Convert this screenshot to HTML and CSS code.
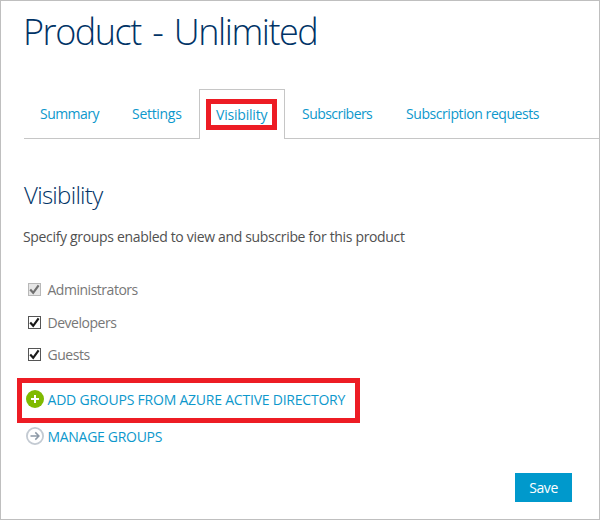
FILE: index.html
```
<!DOCTYPE html>
<html lang="en">
<head>
<meta charset="utf-8">
<title>Product - Unlimited</title>
<link rel="stylesheet" href="styles.css">
</head>
<body>
<main class="page">
  <h1 class="title">Product - Unlimited</h1>
  <nav class="tabs">
    <a class="tab summary">Summary</a>
    <a class="tab settings">Settings</a>
    <a class="tab active"><span class="mark">Visibility</span></a>
    <a class="tab subscribers">Subscribers</a>
    <a class="tab requests">Subscription requests</a>
  </nav>
  <h2 class="heading">Visibility</h2>
  <p class="intro">Specify groups enabled to view and subscribe for this product</p>
  <div class="groups">
    <div class="group disabled">
      <svg class="box" viewBox="0 0 13 13"><rect x=".5" y=".5" width="12" height="12"/><path d="M2.2 6.5 5.2 9.8 10.6 2.4"/></svg>
      <span class="admins">Administrators</span>
    </div>
    <div class="group">
      <svg class="box" viewBox="0 0 13 13"><rect x=".5" y=".5" width="12" height="12"/><path d="M2.2 6.5 5.2 9.8 10.6 2.4"/></svg>
      <span class="devs">Developers</span>
    </div>
    <div class="group">
      <svg class="box" viewBox="0 0 13 13"><rect x=".5" y=".5" width="12" height="12"/><path d="M2.2 6.5 5.2 9.8 10.6 2.4"/></svg>
      <span class="guests">Guests</span>
    </div>
  </div>
  <div class="action highlighted">
    <svg class="icon" viewBox="0 0 18 18"><circle cx="9" cy="9" r="9" fill="#7fba00"/><path d="M9 5v8M5 9h8" stroke="#fff" stroke-width="2"/></svg>
    <a class="add">ADD GROUPS FROM AZURE ACTIVE DIRECTORY</a>
  </div>
  <div class="action">
    <svg class="icon raised" viewBox="0 0 18 18" fill="none"><circle cx="9" cy="9" r="8.1" stroke="#c3cad2" stroke-width="1.8"/><path d="M4.5 9h8M9.3 5.4 12.9 9 9.3 12.6" stroke="#8d99a6" stroke-width="1.5"/></svg>
    <a class="manage">MANAGE GROUPS</a>
  </div>
  <button class="save">Save</button>
</main>
</body>
</html>
```
FILE: styles.css
```
* { box-sizing: border-box; }
body { margin: 0; background: #fff; }
.page {
  width: 600px;
  height: 520px;
  border: 1px solid #bfbfbf;
  overflow: hidden;
  display: flex;
  flex-direction: column;
  font: 14px/20px "Open Sans", "Noto Sans", sans-serif;
  color: #505050;
}
.title {
  margin: 6px 0 0 22px;
  font-size: 36px;
  line-height: 50px;
  font-weight: 300;
  letter-spacing: -1.45px;
  word-spacing: 3.5px;
  color: #003366;
  white-space: nowrap;
}
.tabs {
  display: grid;
  grid-template-columns: 92px 83px 86px 104px 1fr;
  height: 50px;
  margin: 32px 0 0 23px;
  color: #0d98cc;
}
.tab {
  padding: 15px 0 0 16px;
  border-bottom: 1px solid #c6c6c6;
  white-space: nowrap;
}
.summary { letter-spacing: -.55px; }
.settings { letter-spacing: -.3px; }
.subscribers { padding-left: 17px; letter-spacing: -.55px; }
.requests { padding-left: 17px; letter-spacing: -.43px; }
.tab.active {
  padding: 9px 0 0 6px;
  border: 1px solid #c6c6c6;
  border-bottom: 0;
  letter-spacing: -.2px;
}
.mark {
  display: block;
  width: 71px;
  height: 31px;
  padding: 1px 0 0 5px;
  border: 5px solid #ed1c24;
}
.heading {
  margin: 39px 0 0 23px;
  font-size: 24px;
  line-height: 34px;
  font-weight: 300;
  letter-spacing: -.7px;
  color: #003366;
}
.intro { margin: 15px 0 0 22px; letter-spacing: -.33px; white-space: nowrap; }
.groups {
  display: grid;
  grid-template-rows: 33px 32px 31px;
  margin: 33px 0 0 27px;
  color: #777;
  letter-spacing: -.48px;
}
.group { display: flex; align-items: flex-start; gap: 6.5px; }
.box {
  width: 13px;
  height: 13px;
  margin-top: 3px;
  fill: #fff;
  stroke: #555;
}
.box path { fill: none; stroke: #1a1a1a; stroke-width: 2.2; }
.disabled .box { fill: #e6e6e6; stroke: #b8b8b8; }
.disabled .box path { fill: none; stroke: #707070; }
.action {
  display: flex;
  align-items: center;
  gap: 3.5px;
  height: 27px;
  margin-left: 25px;
  color: #0d98cc;
  white-space: nowrap;
}
.highlighted {
  width: 343px;
  height: 45px;
  margin: 2px 0 0 16px;
  padding: 0 0 3px 4px;
  border: 5px solid #ed1c24;
}
.add { padding-top: 2px; letter-spacing: -.22px; }
.manage { padding-top: 1px; letter-spacing: -.3px; }
.icon { width: 18px; height: 18px; flex: none; }
.raised { margin-bottom: 2px; }
.save {
  align-self: flex-end;
  width: 57px;
  height: 29px;
  margin: 23px 27px 0 0;
  padding: 0;
  border: 0;
  background: #0099cc;
  color: #fff;
  font: inherit;
  letter-spacing: -.4px;
}
```
